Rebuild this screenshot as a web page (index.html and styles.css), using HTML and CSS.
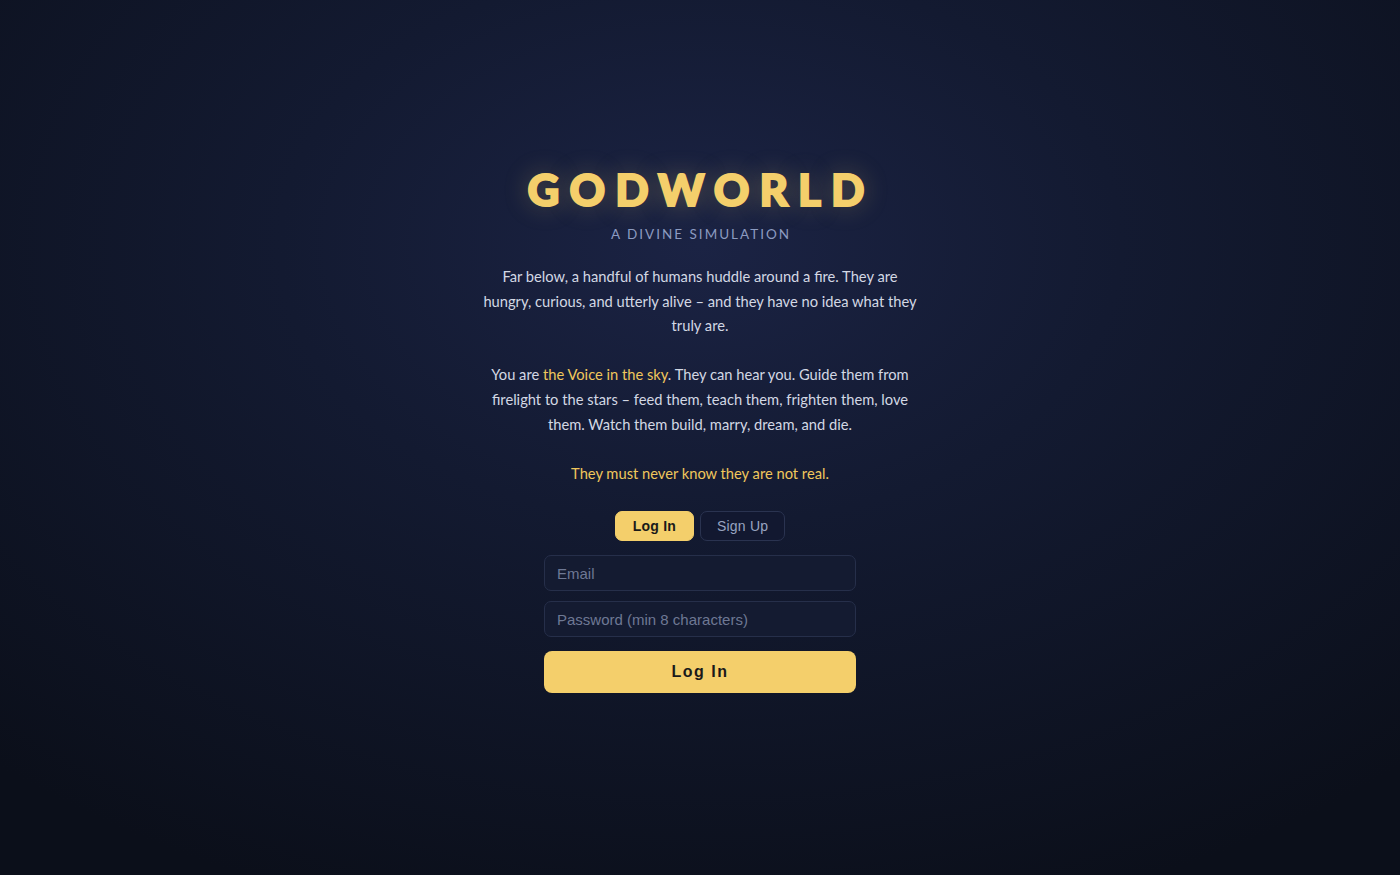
FILE: index.html
```html
<!DOCTYPE html>
<html lang="en">
<head>
    <meta charset="UTF-8">
    <meta name="viewport" content="width=device-width, initial-scale=1.0">
    <title>Godworld</title>
    <link rel="stylesheet" href="styles.css">
</head>
<body>
    <main class="intro">
        <h1 class="title">GODWORLD</h1>
        <div class="subtitle">A DIVINE SIMULATION</div>

        <div class="story">
            <p>Far below, a handful of humans huddle around a fire. They are hungry, curious, and utterly alive &ndash; and they have no idea what they truly are.</p>
            <p>You are <span class="gold">the Voice in the sky</span>. They can hear you. Guide them from firelight to the stars &ndash; feed them, teach them, frighten them, love them. Watch them build, marry, dream, and die.</p>
            <p class="gold">They must never know they are not real.</p>
        </div>

        <div class="tabs">
            <button class="tab active">Log In</button>
            <button class="tab">Sign Up</button>
        </div>

        <form class="auth-form" onsubmit="return false">
            <input type="email" class="field" placeholder="Email">
            <input type="password" class="field" placeholder="Password (min 8 characters)">
            <button type="submit" class="submit-btn">Log In</button>
        </form>
    </main>
</body>
</html>
```

FILE: styles.css
```css
* {
    margin: 0;
    padding: 0;
    box-sizing: border-box;
}

body {
    font-family: 'Lato', 'Open Sans', sans-serif;
    background: radial-gradient(ellipse 75% 80% at 50% 28%, #1b2344 0%, #131a31 40%, #0b0f1a 100%);
    color: #d3d8e4;
    min-height: 100vh;
    display: flex;
    justify-content: center;
    align-items: flex-start;
}

.intro {
    width: 440px;
    margin-top: 161px;
    display: flex;
    flex-direction: column;
    align-items: center;
    text-align: center;
}

.title {
    font-family: 'Lato', sans-serif;
    font-weight: 900;
    font-size: 44px;
    line-height: 56px;
    letter-spacing: 10px;
    margin-right: -2px;
    color: #f4cf6b;
    -webkit-text-stroke: 2px #f4cf6b;
    text-shadow: 0 0 24px rgba(244, 207, 107, 0.35);
}

.subtitle {
    margin-top: 9px;
    font-size: 13.5px;
    letter-spacing: 2px;
    margin-right: -2px;
    color: #8c9bc0;
}

.story {
    margin-top: 22px;
    font-size: 14.7px;
    line-height: 24.6px;
    color: #d3d8e4;
}

.story p {
    margin-bottom: 24.6px;
}

.story p:last-child {
    margin-bottom: 0;
}

.gold {
    color: #f0c75c;
}

.tabs {
    display: flex;
    gap: 6px;
    margin-top: 26px;
}

.tab {
    font-family: 'Liberation Sans', Arial, sans-serif;
    font-size: 14px;
    height: 30px;
    padding: 0 16px;
    border-radius: 7px;
    border: 1px solid #2a3350;
    background: #121830;
    color: #98a4c0;
    letter-spacing: 0.2px;
    cursor: pointer;
}

.tab.active {
    padding: 0 17px;
    background: #f4cf6b;
    border-color: #f4cf6b;
    color: #1a1a1a;
    font-weight: bold;
}

.auth-form {
    width: 312px;
    margin-top: 14px;
    display: flex;
    flex-direction: column;
    gap: 10px;
}

.field {
    height: 36px;
    padding: 0 12px;
    font-family: 'Liberation Sans', Arial, sans-serif;
    font-size: 15px;
    color: #d3d8e4;
    background: #141b31;
    border: 1px solid #262f4a;
    border-radius: 7px;
    outline: none;
}

.field::placeholder {
    color: #6e7894;
}

.submit-btn {
    margin-top: 4px;
    height: 42px;
    font-family: 'Liberation Sans', Arial, sans-serif;
    font-size: 16px;
    font-weight: bold;
    letter-spacing: 1.5px;
    color: #1a1a1a;
    background: #f4cf6b;
    border: none;
    border-radius: 8px;
    cursor: pointer;
}
```
